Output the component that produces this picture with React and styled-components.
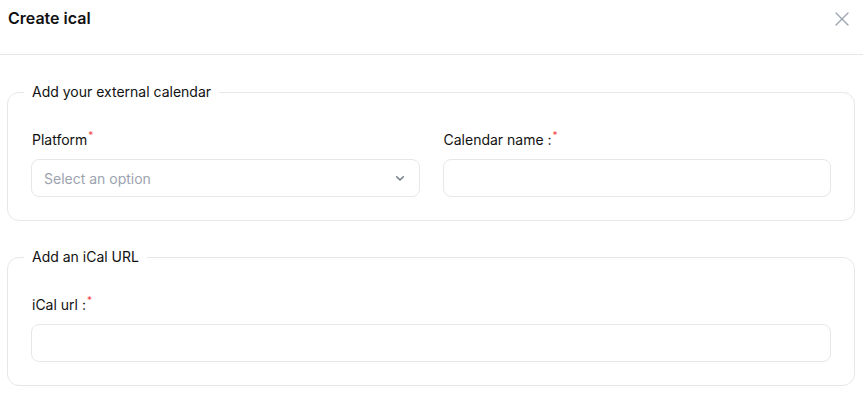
import styled, { createGlobalStyle } from "styled-components";

const Global = createGlobalStyle`
  body {
    margin: 0;
    background: #fff;
    font-family: Inter, "Noto Sans", sans-serif;
    color: #111827;
  }
`;

const Header = styled.div`
  height: 55px;
  box-sizing: border-box;
  border-bottom: 1px solid #e5e7eb;
  display: flex;
  align-items: flex-start;
  justify-content: space-between;
  padding: 8px 14px 0 8px;
`;

const Title = styled.h2`
  margin: 0;
  font-size: 16px;
  line-height: 20px;
  font-weight: 600;
  color: #111;
`;

const Close = styled.button`
  border: 0;
  background: none;
  padding: 0;
  margin-top: 4px;
  width: 14px;
  height: 14px;
  display: flex;
  color: #9ca3af;
  cursor: pointer;
`;

const Body = styled.div`
  padding: 27px 8px 0 7px;
  display: flex;
  flex-direction: column;
  gap: 26px;
`;

const Section = styled.fieldset`
  margin: 0;
  border: 1px solid #e5e7eb;
  border-radius: 12px;
  padding: 0 23px 23px 23px;
  min-width: 0;
`;

const Legend = styled.legend`
  font-size: 14px;
  line-height: 20px;
  font-weight: 400;
  color: #111;
  padding: 0 8px;
  margin-left: -7px;
`;

const Grid = styled.div`
  display: grid;
  grid-template-columns: repeat(${({ $cols }) => $cols}, 1fr);
  gap: 23px;
  margin-top: 28px;
`;

const Field = styled.div`
  display: flex;
  flex-direction: column;
`;

const Label = styled.label`
  font-size: 14px;
  line-height: 20px;
  color: #111;
  margin: 0 0 9px 1px;
  sup {
    color: #ef4444;
    font-size: 10px;
    line-height: 0;
    vertical-align: 6px;
    margin-left: 1px;
  }
`;

const Box = styled.div`
  height: 38px;
  box-sizing: border-box;
  border: 1px solid #e5e7eb;
  border-radius: 8px;
  display: flex;
  align-items: center;
  justify-content: space-between;
  padding: 0 11px 0 12px;
  font-size: 14px;
  color: #9ca3af;
`;

const Input = styled.input`
  height: 38px;
  box-sizing: border-box;
  border: 1px solid #e5e7eb;
  border-radius: 8px;
  padding: 0 12px;
  font: inherit;
  font-size: 14px;
  outline: none;
  width: 100%;
`;

function Chevron() {
  return (
    <svg width="16" height="16" viewBox="0 0 24 24" fill="none" stroke="#6b7280" strokeWidth="2" strokeLinecap="round" strokeLinejoin="round">
      <path d="M7 10l5 5 5-5" />
    </svg>
  );
}

export default function App() {
  return (
    <>
      <Global />
      <Header>
        <Title>Create ical</Title>
        <Close aria-label="close">
          <svg width="14" height="14" viewBox="0 0 14 14" stroke="currentColor" strokeWidth="1.4" strokeLinecap="round">
            <path d="M1 1l12 12M13 1L1 13" />
          </svg>
        </Close>
      </Header>
      <Body>
        <Section>
          <Legend>Add your external calendar</Legend>
          <Grid $cols={2}>
            <Field>
              <Label>Platform<sup>*</sup></Label>
              <Box>
                <span>Select an option</span>
                <Chevron />
              </Box>
            </Field>
            <Field>
              <Label>Calendar name :<sup>*</sup></Label>
              <Input />
            </Field>
          </Grid>
        </Section>
        <Section>
          <Legend>Add an iCal URL</Legend>
          <Grid $cols={1}>
            <Field>
              <Label>iCal url :<sup>*</sup></Label>
              <Input />
            </Field>
          </Grid>
        </Section>
      </Body>
    </>
  );
}
